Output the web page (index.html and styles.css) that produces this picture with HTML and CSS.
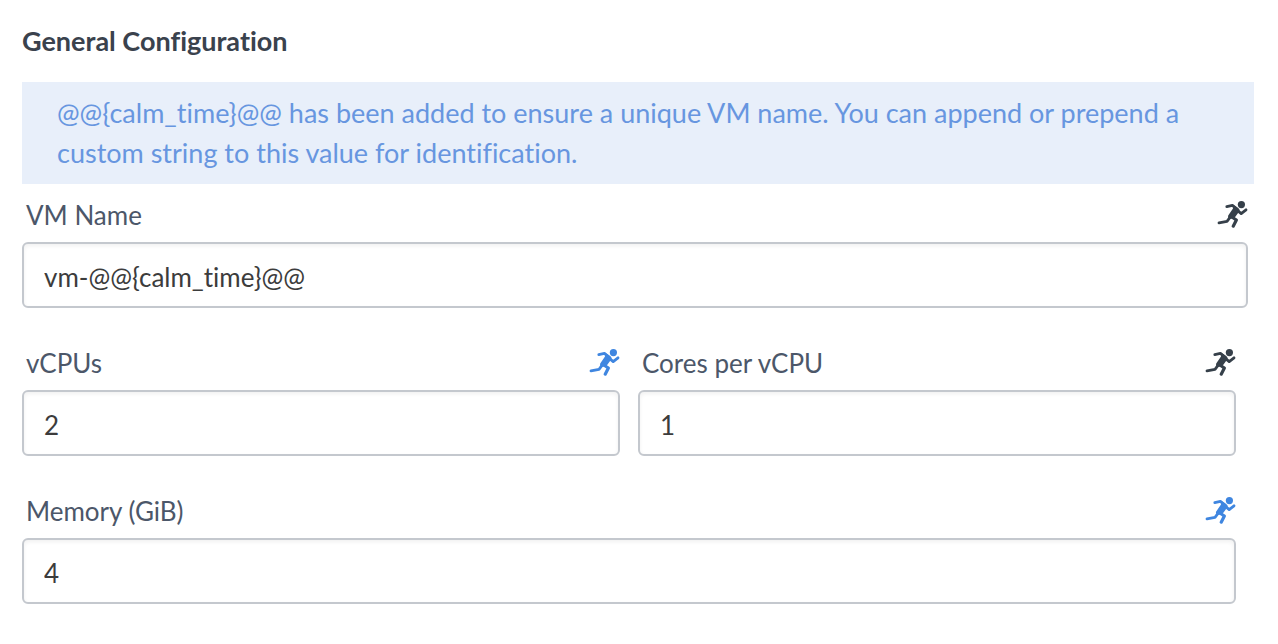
FILE: index.html
```html
<!DOCTYPE html>
<html lang="en">
<head>
<meta charset="utf-8">
<meta name="viewport" content="width=device-width, initial-scale=1">
<title>General Configuration</title>
<link rel="stylesheet" href="styles.css">
</head>
<body>
<svg class="sprite" aria-hidden="true">
  <symbol id="runner" viewBox="0 0 32 30">
    <g fill="none" stroke="currentColor" stroke-linecap="round" stroke-linejoin="round">
      <path stroke-width="2.8" d="M10.8 6.6 16.4 5.4 20.5 8.5"/>
      <path stroke-width="2.8" d="M21.4 10.4 25.2 13.6 30 9.8"/>
      <path stroke-width="3.2" d="M15 16.5 20.4 20 17.2 26.2"/>
      <path stroke-width="2.8" d="M14 17.4 11 21.4 3 22.9"/>
    </g>
    <path fill="currentColor" d="M16.4 4.2 22.8 8.6Q24.4 10 23 11.8L18.4 18 13.4 19Q11.2 17 12.2 15.4L17 8.6Z"/>
    <circle fill="currentColor" cx="25.4" cy="4.6" r="3.6"/>
  </symbol>
</svg>
<main class="config">
  <h1 class="title">General Configuration</h1>
  <p class="notice">@@{calm_time}@@ has been added to ensure a unique VM name. You can append or prepend a custom string to this value for identification.</p>
  <form class="form">
    <div class="field field-wide">
      <div class="field-head">
        <label for="vm-name">VM Name</label>
        <button class="runtime" type="button" aria-label="VM Name runtime"><svg class="icon" aria-hidden="true"><use href="#runner"/></svg></button>
      </div>
      <input class="input" id="vm-name" type="text" value="vm-@@{calm_time}@@">
    </div>
    <div class="row">
      <div class="field">
        <div class="field-head">
          <label for="vcpus">vCPUs</label>
          <button class="runtime runtime-on" type="button" aria-label="vCPUs runtime"><svg class="icon" aria-hidden="true"><use href="#runner"/></svg></button>
        </div>
        <input class="input" id="vcpus" type="text" value="2">
      </div>
      <div class="field">
        <div class="field-head">
          <label for="cores">Cores per vCPU</label>
          <button class="runtime" type="button" aria-label="Cores runtime"><svg class="icon" aria-hidden="true"><use href="#runner"/></svg></button>
        </div>
        <input class="input" id="cores" type="text" value="1">
      </div>
    </div>
    <div class="row">
      <div class="field">
        <div class="field-head">
          <label for="memory">Memory (GiB)</label>
          <button class="runtime runtime-on" type="button" aria-label="Memory runtime"><svg class="icon" aria-hidden="true"><use href="#runner"/></svg></button>
        </div>
        <input class="input" id="memory" type="text" value="4">
      </div>
    </div>
  </form>
</main>
</body>
</html>
```
FILE: styles.css
```css
* {
  box-sizing: border-box;
}

body {
  margin: 0;
  background: #fff;
  color: #4c5769;
  font-family: Lato, "Open Sans", sans-serif;
  font-size: 26px;
  font-variant-ligatures: none;
  line-height: 40px;
}

.sprite {
  display: none;
}

.config {
  padding: 21px 24px 40px 22px;
}

.title {
  margin: 0 0 21px;
  color: #3a424d;
  font-size: 27px;
  font-weight: 700;
  line-height: 40px;
}

.notice {
  margin: 0;
  padding: 11px 35px;
  background: #e8effa;
  color: #6796e0;
  font-size: 27px;
}

.form {
  display: flex;
  flex-direction: column;
  gap: 36px;
  padding: 12px 18px 0 0;
}

.field {
  flex: 1;
  min-width: 0;
}

.field-wide {
  margin-right: -12px;
}

.row {
  display: flex;
  gap: 18px;
}

.field-head {
  display: flex;
  align-items: center;
  justify-content: space-between;
  height: 38px;
  margin-bottom: 8px;
  padding-left: 4px;
}

.runtime {
  display: block;
  padding: 0;
  border: 0;
  background: none;
  color: #36404a;
  cursor: pointer;
}

.runtime-on {
  color: #3f86e0;
}

.icon {
  display: block;
  width: 32px;
  height: 30px;
}

.input {
  display: block;
  width: 100%;
  height: 66px;
  padding: 4px 20px 0;
  border: 2px solid #c4c8ce;
  border-radius: 6px;
  background: #fff;
  box-shadow: inset 0 2px 4px rgba(0, 0, 0, 0.06);
  color: #3c3c3c;
  font: inherit;
}
```
